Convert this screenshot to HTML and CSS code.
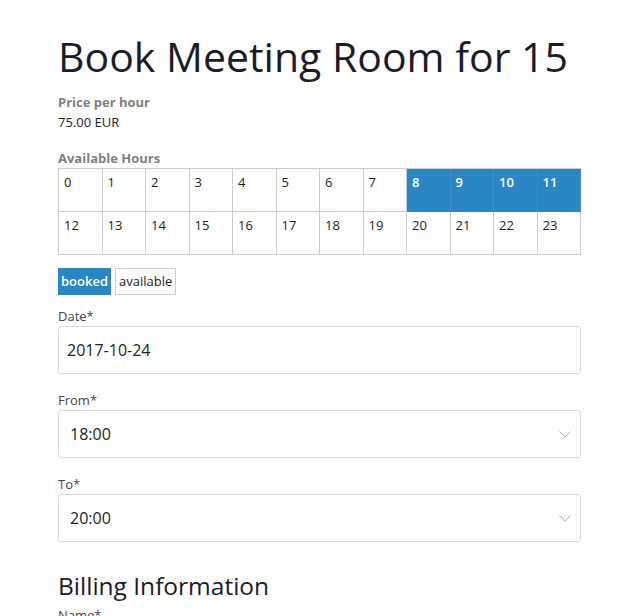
FILE: index.html
```html
<!DOCTYPE html>
<html lang="en">
<head>
    <meta charset="UTF-8">
    <meta name="viewport" content="width=device-width, initial-scale=1.0">
    <title>Book Meeting Room for 15</title>
    <link rel="stylesheet" href="styles.css">
</head>
<body>
    <div class="page">
        <h1 class="title">Book Meeting Room for 15</h1>
        <div class="info">
            <div class="info-label">Price per hour</div>
            <div class="info-value">75.00 EUR</div>
        </div>
        <div class="hours">
            <div class="info-label">Available Hours</div>
            <div class="hours-grid" id="hours-grid"></div>
        </div>
        <div class="legend">
            <span class="legend-item booked">booked</span>
            <span class="legend-item">available</span>
        </div>
        <div class="field">
            <label class="field-label">Date*</label>
            <div class="field-box date">2017-10-24</div>
        </div>
        <div class="field">
            <label class="field-label">From*</label>
            <div class="field-box">18:00
                <svg class="chevron" width="12" height="7" viewBox="0 0 12 7"><path d="M0.5 0.5 L6 6 L11.5 0.5" fill="none" stroke="#aaa" stroke-width="1"/></svg>
            </div>
        </div>
        <div class="field">
            <label class="field-label">To*</label>
            <div class="field-box">20:00
                <svg class="chevron" width="12" height="7" viewBox="0 0 12 7"><path d="M0.5 0.5 L6 6 L11.5 0.5" fill="none" stroke="#aaa" stroke-width="1"/></svg>
            </div>
        </div>
        <h2 class="subtitle">Billing Information</h2>
        <label class="field-label name">Name*</label>
    </div>
    <script>
        let booked = [8, 9, 10, 11];
        let grid = document.getElementById("hours-grid");
        for (let h = 0; h < 24; h++) {
            let cell = document.createElement("div");
            cell.classList.add("hour");
            if (booked.includes(h)) cell.classList.add("booked");
            cell.textContent = h;
            grid.appendChild(cell);
        }
    </script>
</body>
</html>
```

FILE: styles.css
```css
* {
    margin: 0;
    padding: 0;
    box-sizing: border-box;
}
html, body {
    background-color: #fff;
    font-family: "Open Sans", sans-serif;
    color: #222;
    overflow: hidden;
}
.page {
    width: 523px;
    margin-left: 58px;
    padding-top: 30px;
}
.title {
    font-size: 41px;
    font-weight: 400;
    line-height: 52px;
    color: #1c1c28;
}
.info {
    margin-top: 10px;
}
.info-label {
    font-size: 13px;
    font-weight: 700;
    line-height: 20px;
    color: #808080;
}
.info-value {
    font-size: 13px;
    line-height: 21px;
    color: #222;
}
.hours {
    margin-top: 15px;
}
.hours-grid {
    display: grid;
    grid-template-columns: repeat(12, 1fr);
    border-top: 1px solid #ccc;
    border-left: 1px solid #ccc;
}
.hour {
    height: 43px;
    padding: 4px 5px;
    font-size: 13px;
    line-height: 18px;
    border-right: 1px solid #ccc;
    border-bottom: 1px solid #ccc;
    color: #222;
}
.hour.booked {
    background-color: #2a86c5;
    color: #fff;
    font-weight: 600;
    border-right-color: #3b8fca;
    border-bottom-color: #2a86c5;
}
.legend {
    display: flex;
    gap: 4px;
    margin-top: 13px;
}
.legend-item {
    font-size: 13px;
    line-height: 25px;
    padding: 0 3px;
    border: 1px solid #ccc;
    color: #222;
}
.legend-item.booked {
    background-color: #2a86c5;
    border-color: #2a86c5;
    color: #fff;
    font-weight: 600;
    padding: 0 2px;
}
.field {
    margin-top: 12px;
}
.field-label {
    display: block;
    font-size: 13px;
    line-height: 19px;
    color: #444;
}
.field-box {
    height: 48px;
    border: 1px solid #d8d8d8;
    border-radius: 3px;
    padding: 0 9px 0 11px;
    display: flex;
    align-items: center;
    justify-content: space-between;
    font-size: 16px;
    color: #222;
}
.field-box.date {
    padding-left: 8px;
}
.field + .field {
    margin-top: 17px;
}
.subtitle {
    margin-top: 27px;
    font-size: 24.5px;
    font-weight: 400;
    line-height: 34px;
    color: #1c1c28;
}
.field-label.name {
    margin-top: 3px;
}
```
